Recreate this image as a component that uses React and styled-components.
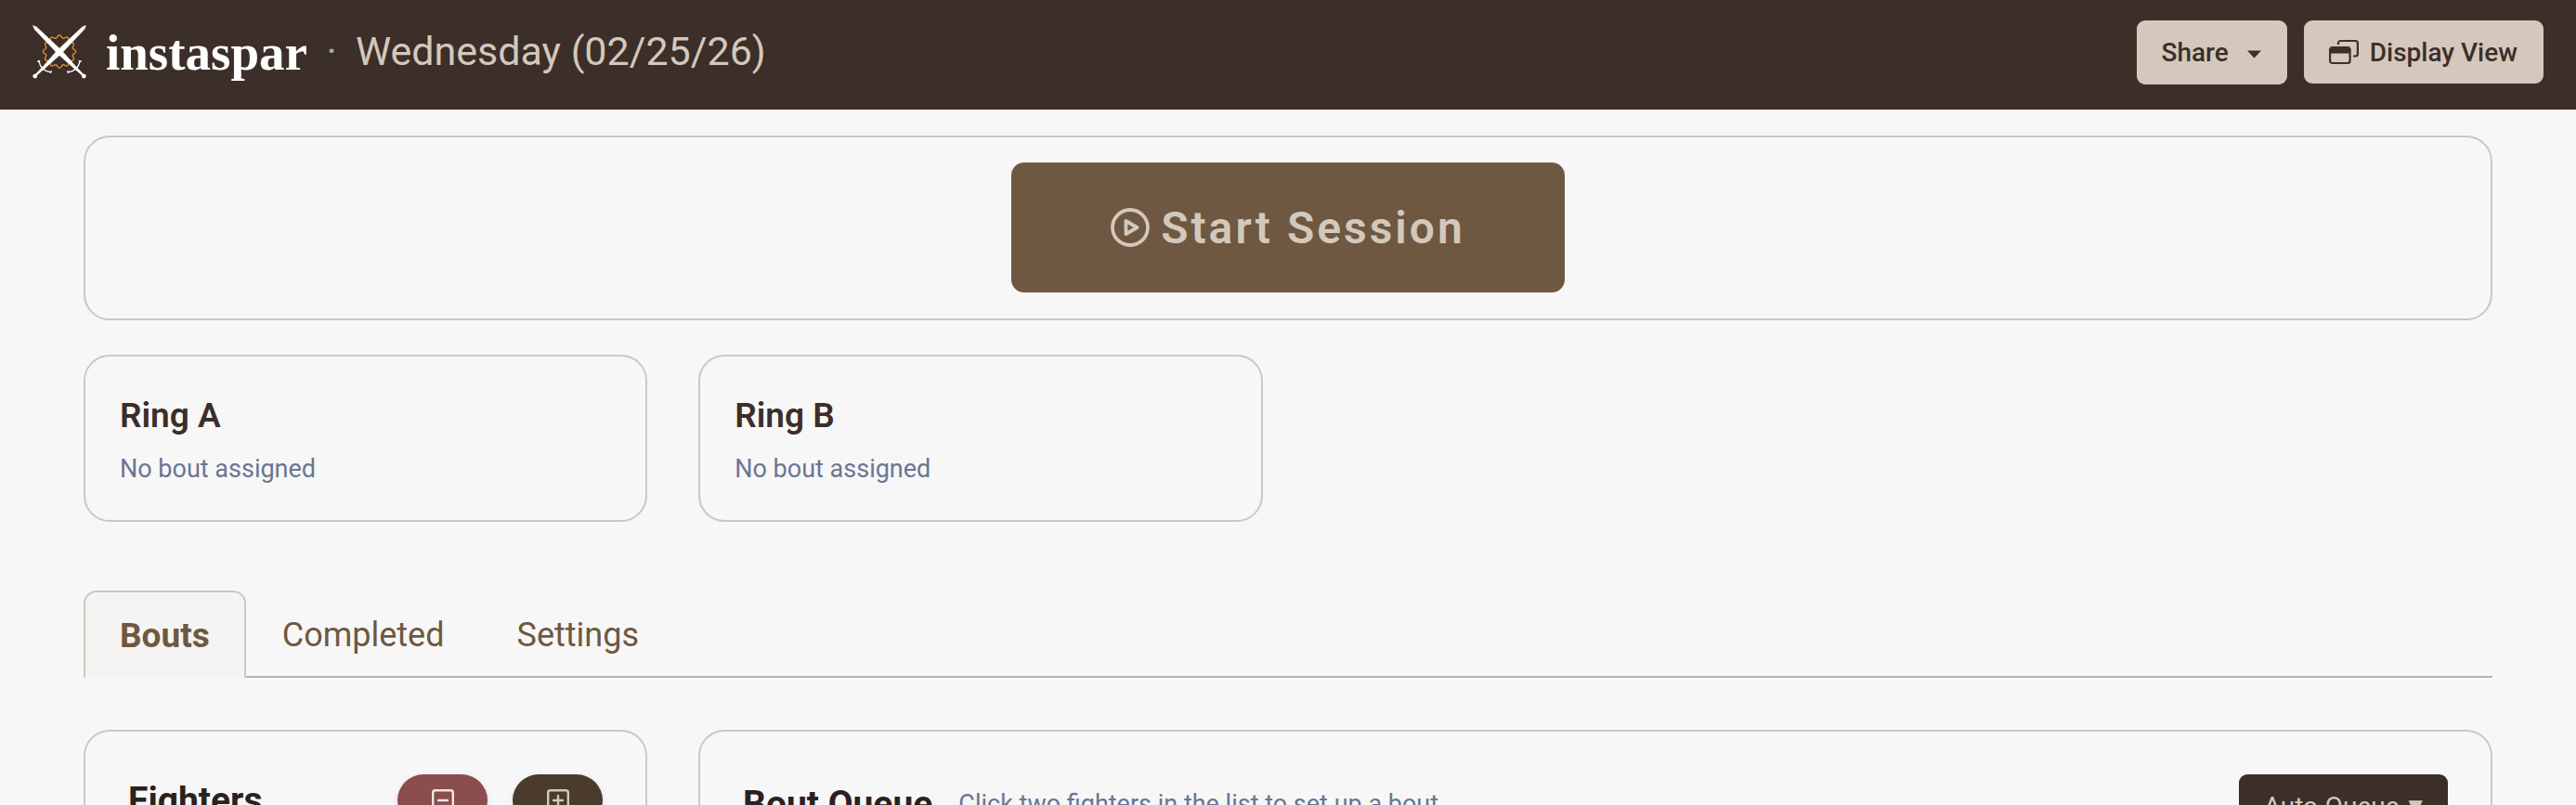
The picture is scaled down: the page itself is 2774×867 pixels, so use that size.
import styled, { createGlobalStyle } from "styled-components";

const tabs = ["Bouts", "Completed", "Settings"];
const rings = ["Ring A", "Ring B"];

export default function App() {
  return (
    <>
      <GlobalStyle />
      <Header>
        <Brand href="/">
          <LogoIcon />
          <Wordmark>instaspar</Wordmark>
        </Brand>
        <Separator>·</Separator>
        <SessionName>Wednesday (02/25/26)</SessionName>
        <HeaderActions>
          <HeaderButton $height={69} $gap={20}>
            Share
            <CaretIcon />
          </HeaderButton>
          <HeaderButton $height={68} $gap={12}>
            <WindowsIcon />
            Display View
          </HeaderButton>
        </HeaderActions>
      </Header>
      <Main>
        <SessionPanel>
          <StartButton>
            <PlayIcon />
            Start Session
          </StartButton>
        </SessionPanel>
        <Rings>
          {rings.map((ring) => (
            <RingCard key={ring}>
              <RingName>{ring}</RingName>
              <Muted>No bout assigned</Muted>
            </RingCard>
          ))}
        </Rings>
        <TabList role="tablist">
          {tabs.map((tab, i) => (
            <Tab key={tab} role="tab" aria-selected={i === 0} $active={i === 0}>
              {tab}
            </Tab>
          ))}
        </TabList>
        <Columns>
          <Panel>
            <PanelHeading $height={56}>
              <PanelTitle>Fighters</PanelTitle>
            </PanelHeading>
            <PillGroup>
              <PillButton $color="#8b4d4d" $ink="#f0e6e2" aria-label="Remove fighter">
                <SquareIcon />
              </PillButton>
              <PillButton $color="#4a3b2d" $ink="#d3c8bb" aria-label="Add fighter">
                <SquareIcon plus />
              </PillButton>
            </PillGroup>
          </Panel>
          <Panel>
            <PanelHeading $height={64}>
              <PanelTitle>Bout Queue</PanelTitle>
              <Muted>Click two fighters in the list to set up a bout</Muted>
            </PanelHeading>
            <QueueButton>
              Auto-Queue <Arrow>▼</Arrow>
            </QueueButton>
          </Panel>
        </Columns>
      </Main>
    </>
  );
}

// crossed swords over a scalloped ring
function LogoIcon() {
  const points = [];
  for (let i = 0; i <= 240; i++) {
    const a = (i / 240) * Math.PI * 2;
    const r = 16.2 + Math.cos(a * 12) * 1.4;
    points.push(`${(29 + Math.sin(a) * r).toFixed(2)},${(28.5 - Math.cos(a) * r).toFixed(2)}`);
  }
  return (
    <svg width="58" height="58" viewBox="0 0 58 58">
      <polygon points={points.join(" ")} fill="none" stroke="#dc902f" strokeWidth="1.4" />
      <Sword />
      <Sword transform="matrix(-1 0 0 1 58 0)" />
    </svg>
  );
}

function Sword({ transform }) {
  return (
    <g transform={transform} fill="#fff" stroke="#fff">
      <path d="M.5.5 4.6 2.2 31.5 27.5 47 45l8 8.2-1.2 1.2L45.2 47 27.2 31 2.2 4.6Z" strokeWidth=".6" />
      <circle cx="55.3" cy="55" r="2.2" strokeWidth=".4" />
      <path d="M39 50.5c6-.5 11-5 12-11.5" strokeWidth="1.4" fill="none" />
      <path d="M37.500 49.3l1.2 2.5M49.8 38.600l3 .6" strokeWidth="1.5" />
    </g>
  );
}

function CaretIcon() {
  return (
    <svg width="15" height="28" viewBox="0 0 15 28" fill="currentColor">
      <path d="M0 11.500h15l-7.500 8Z" />
    </svg>
  );
}

function WindowsIcon() {
  return (
    <svg width="32" height="28" viewBox="0 0 32 28" fill="none" stroke="currentColor" strokeWidth="2.2">
      <path d="M10 6V4.500a2.500 2.500 0 0 1 2.500-2.500h15.900a2.500 2.500 0 0 1 2.500 2.500v11.500a2.500 2.500 0 0 1-2.500 2.500H26" />
      <rect x="1.100" y="9" width="21.500" height="17" rx="2.500" />
      <path d="M1.500 11h20.500M1.500 13.500h20.500" strokeWidth="4" />
    </svg>
  );
}

function PlayIcon() {
  return (
    <svg width="42" height="42" viewBox="0 0 42 42" fill="none" stroke="currentColor" strokeWidth="3.8">
      <circle cx="21" cy="21" r="19" />
      <path d="M16.500 14v14l12-7Z" strokeLinejoin="round" />
    </svg>
  );
}

function SquareIcon({ plus }) {
  return (
    <svg width="24" height="24" viewBox="0 0 24 24" fill="none" stroke="currentColor" strokeWidth="2.4" strokeLinecap="round">
      <rect x="1.2" y="1.2" width="21.6" height="21.6" rx="2.5" />
      <path d={plus ? "M7 12h10M12 7v10" : "M7 12h10"} />
    </svg>
  );
}

const GlobalStyle = createGlobalStyle`
  * {
    box-sizing: border-box;
  }

  body {
    margin: 0;
    overflow: hidden;
    background: #f7f7f7;
    color: #3c2e28;
    font-family: Roboto, sans-serif;
    font-size: 28px;
  }

  button {
    border: 0;
    cursor: pointer;
    font: inherit;
  }
`;

const Header = styled.header`
  display: flex;
  align-items: flex-start;
  height: 118px;
  padding: 22px 35px 0;
  background: #3c2e28;
`;

const Brand = styled.a`
  display: flex;
  align-items: center;
  gap: 21px;
  height: 68px;
  color: #fff;
  text-decoration: none;
`;

const Wordmark = styled.span`
  font-family: "Liberation Serif", serif;
  font-size: 55px;
  font-weight: 700;
`;

const Separator = styled.span`
  width: 52px;
  font-size: 43px;
  line-height: 66px;
  text-align: center;
  color: #a0aec0;
`;

const SessionName = styled.h1`
  margin: 0;
  font-size: 43px;
  font-weight: 400;
  line-height: 66px;
  color: #d3c8bb;
`;

const HeaderActions = styled.div`
  display: flex;
  align-items: flex-start;
  gap: 18px;
  margin-left: auto;
`;

const HeaderButton = styled.button`
  display: flex;
  align-items: center;
  gap: ${({ $gap }) => $gap}px;
  height: ${({ $height }) => $height}px;
  padding: 0 28px 0 27px;
  border-radius: 9px;
  background: #d3c8bb;
  color: #3c2e28;
  font-weight: 500;
`;

const Main = styled.main`
  padding: 28px 90px 0;
`;

const SessionPanel = styled.section`
  display: flex;
  justify-content: center;
  padding: 27px 27px 28px;
  border: 2px solid #cdc7c1;
  border-radius: 28px;
`;

const StartButton = styled.button`
  display: flex;
  align-items: center;
  justify-content: center;
  gap: 12px;
  width: 596px;
  height: 140px;
  border-radius: 14px;
  background: #6f5841;
  color: #d3c8bb;
  font-size: 48px;
  font-weight: 600;
  letter-spacing: 3px;
`;

const Rings = styled.div`
  display: grid;
  grid-template-columns: repeat(4, 1fr);
  gap: 55px;
  margin-top: 37px;
`;

const RingCard = styled.section`
  height: 180px;
  padding: 38px 37px;
  border: 2px solid #cdc7c1;
  border-radius: 28px;
`;

const RingName = styled.h2`
  margin: 0 0 11px;
  font-size: 37px;
  font-weight: 600;
  line-height: 52px;
`;

const Muted = styled.p`
  margin: 0;
  font-size: 27px;
  line-height: 40px;
  color: #6b7592;
`;

const TabList = styled.div`
  display: flex;
  margin-top: 74px;
  box-shadow: inset 0 -2px #b8b2ac;
`;

const Tab = styled.button`
  height: 94px;
  padding: 0 37px;
  border: 2px solid transparent;
  border-bottom: 0;
  border-color: ${({ $active }) => ($active ? "#cdc7c1" : "transparent")};
  border-radius: 14px 14px 0 0;
  background: ${({ $active }) => ($active ? "#f6f4f2" : "transparent")};
  color: #6f5841;
  font-size: ${({ $active }) => ($active ? 37 : 36)}px;
  font-weight: ${({ $active }) => ($active ? 700 : 400)};
`;

const Columns = styled.div`
  display: grid;
  grid-template-columns: 607px 1fr;
  gap: 55px;
  margin-top: 56px;
`;

const Panel = styled.section`
  display: flex;
  align-items: flex-start;
  justify-content: space-between;
  height: 400px;
  padding: 46px;
  border: 2px solid #cdc7c1;
  border-radius: 28px;
`;

const PanelHeading = styled.div`
  display: flex;
  align-items: center;
  gap: 28px;
  height: ${({ $height }) => $height}px;
`;

const PanelTitle = styled.h2`
  margin: 0;
  font-size: 39px;
  font-weight: 700;
  color: #2c211e;
`;

const PillGroup = styled.div`
  display: flex;
  gap: 27px;
`;

const PillButton = styled.button`
  display: flex;
  justify-content: center;
  width: 97px;
  height: 56px;
  padding: 16px 0;
  border-radius: 28px;
  background: ${({ $color }) => $color};
  box-shadow: 0 2px 6px rgba(0, 0, 0, 0.1);
  color: ${({ $ink }) => $ink};
`;

const QueueButton = styled.button`
  display: flex;
  align-items: center;
  gap: 10px;
  height: 68px;
  padding: 0 27px;
  border-radius: 9px;
  background: #3c2e28;
  color: #d3c8bb;
`;

const Arrow = styled.span`
  font-family: "DejaVu Sans", sans-serif;
  font-size: 20px;
`;
